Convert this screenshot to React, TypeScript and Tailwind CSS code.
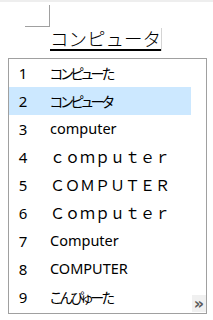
import React from "react";

type Candidate = {
  label: string;
  kind: "ja" | "latin" | "wide";
};

const candidates: Candidate[] = [
  { label: "コンピューた", kind: "ja" },
  { label: "コンピュータ", kind: "ja" },
  { label: "computer", kind: "latin" },
  { label: "ｃｏｍｐｕｔｅｒ", kind: "wide" },
  { label: "ＣＯＭＰＵＴＥＲ", kind: "wide" },
  { label: "Ｃｏｍｐｕｔｅｒ", kind: "wide" },
  { label: "Computer", kind: "latin" },
  { label: "COMPUTER", kind: "latin" },
  { label: "こんぴゅーた", kind: "ja" },
];

const kindClass = {
  ja: "font-['Noto_Sans_CJK_JP',sans-serif] text-[14px] tracking-[-2.5px] [font-feature-settings:'palt']",
  latin: "font-['Noto_Sans',sans-serif] text-[14.5px]",
  wide: "font-['Noto_Sans_CJK_JP',sans-serif] text-[15px]",
};

const App: React.FC = () => {
  const selected = 1;

  return (
    <div className="w-[213px] h-[320px] bg-white overflow-hidden text-black">
      <div className="h-[2px] bg-[#eeeeee]" />
      {/* margin corner mark */}
      <div className="ml-[25px] mt-[3px] w-[25px] h-[22px] border-r border-b border-[#a0a0a0]" />

      {/* composing text */}
      <div className="flex items-end ml-[50px] h-[24px]">
        <span className="font-['Noto_Sans_CJK_JP',sans-serif] font-light text-[18.5px] leading-[22px] border-b-2 border-black">
          コンピュータ
        </span>
        <div className="w-px h-[23px] bg-[#d4d4d4]" />
      </div>

      {/* candidate window */}
      <div className="mt-[7px] ml-[8px] w-[199px] h-[256px] border border-[#a0a0a0] flex">
        <div className="w-[182px] flex flex-col">
          {candidates.map((c, i) => (
            <div
              key={i}
              className={
                "h-[28px] flex items-center " + (i === selected ? "bg-[#cce8ff]" : "")
              }
            >
              <span className="w-[28px] text-center font-['Noto_Sans',sans-serif] text-[15px]">
                {i + 1}
              </span>
              <span className={"pl-[13px] whitespace-nowrap " + kindClass[c.kind]}>
                {c.label}
              </span>
            </div>
          ))}
        </div>
        <div className="flex-1 flex flex-col justify-end items-end">
          <div className="w-[14px] h-[17px] mb-[1px] bg-[#f0f0f0] flex items-center justify-center text-[#5a5a5a] font-['DejaVu_Sans',sans-serif] text-[16px] leading-none font-bold">
            »
          </div>
        </div>
      </div>
    </div>
  );
};

export default App;
